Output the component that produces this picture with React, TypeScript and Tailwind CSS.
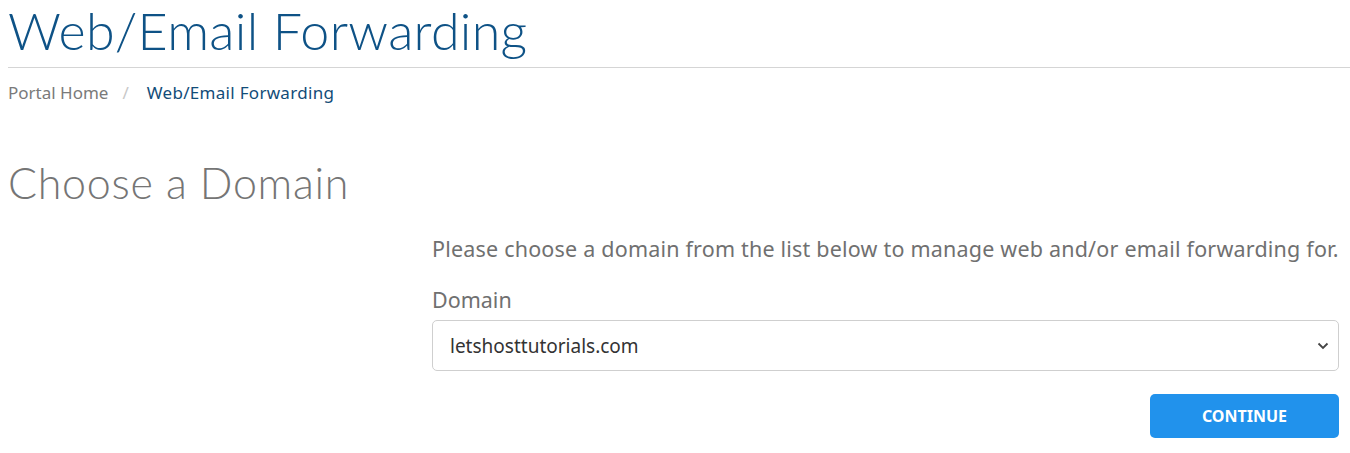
import React, { useState } from 'react';

const heading = { fontFamily: '"Lato", "Open Sans", sans-serif' };
const body = { fontFamily: '"Noto Sans", "Open Sans", sans-serif' };

export default function App() {
  const [domain, setDomain] = useState('letshosttutorials.com');

  return (
    <div className="h-[453px] w-[1350px] overflow-hidden bg-white pl-2" style={body}>
      <div className="border-b border-[#d5d5d5] pb-[8px]">
        <h1 className="pt-[1px] text-[52px] leading-[58px] font-light tracking-[0.3px] text-[#0e5286]" style={heading}>
          Web/Email Forwarding
        </h1>
      </div>

      <nav className="mt-[12px] flex items-center text-[17px] leading-[26px]">
        <a href="#" className="text-[#7a7a7a]">Portal Home</a>
        <span className="pl-[14px] pr-[18px] text-[#c8c8c8]">/</span>
        <span className="tracking-[0.3px] text-[#124c78]">Web/Email Forwarding</span>
      </nav>

      <h2 className="mt-[52px] text-[43px] leading-[50px] font-light tracking-[0.7px] text-[#757575]" style={heading}>
        Choose a Domain
      </h2>

      <div className="ml-[424px] mr-[11px] mt-[27px]">
        <p className="text-[21.5px] leading-[28px] tracking-[0.2px] text-[#707070]">
          Please choose a domain from the list below to manage web and/or email forwarding for.
        </p>
        <label className="mt-[23px] block text-[21.5px] leading-[28px] text-[#707070]">Domain</label>
        <div className="relative mt-[6px]">
          <select
            value={domain}
            onChange={(e) => setDomain(e.target.value)}
            className="h-[51px] w-full appearance-none rounded-[5px] border border-[#cfcfcf] bg-white pl-[17px] pt-[2px] text-[19px] text-[#333]"
            style={body}
          >
            <option>letshosttutorials.com</option>
          </select>
          <svg className="pointer-events-none absolute right-[9px] top-[21px]" width="14" height="10" viewBox="0 0 14 10">
            <path d="M2.5 2.5 L7 7 L11.5 2.5" fill="none" stroke="#444" strokeWidth="1.8" />
          </svg>
        </div>
        <div className="mt-[23px] flex justify-end">
          <button className="h-[44px] w-[189px] rounded-[5px] bg-[#2192ec] text-[16px] font-bold text-white">
            CONTINUE
          </button>
        </div>
      </div>
    </div>
  );
}
